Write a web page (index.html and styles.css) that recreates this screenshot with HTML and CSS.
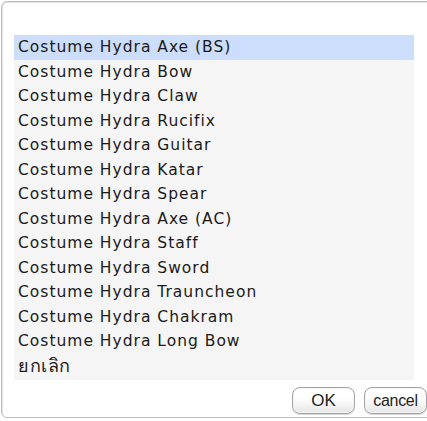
FILE: index.html
```html
<!DOCTYPE html>
<html>
<head>
<meta charset="utf-8">
<link rel="stylesheet" href="styles.css">
</head>
<body>
<div class="dialog">
  <ul class="list">
    <li class="item selected">Costume Hydra Axe (BS)</li>
    <li class="item">Costume Hydra Bow</li>
    <li class="item">Costume Hydra Claw</li>
    <li class="item">Costume Hydra Rucifix</li>
    <li class="item">Costume Hydra Guitar</li>
    <li class="item">Costume Hydra Katar</li>
    <li class="item">Costume Hydra Spear</li>
    <li class="item">Costume Hydra Axe (AC)</li>
    <li class="item">Costume Hydra Staff</li>
    <li class="item">Costume Hydra Sword</li>
    <li class="item">Costume Hydra Trauncheon</li>
    <li class="item">Costume Hydra Chakram</li>
    <li class="item">Costume Hydra Long Bow</li>
    <li class="item thai">ยกเลิก</li>
  </ul>
  <div class="buttons">
    <button class="btn ok">OK</button>
    <button class="btn cancel">cancel</button>
  </div>
</div>
</body>
</html>
```
FILE: styles.css
```css
html, body {
  margin: 0;
  padding: 0;
  background: #ffffff;
  overflow: hidden;
}
.dialog {
  box-sizing: border-box;
  margin: 1px 0 0 1px;
  width: 432px;
  height: 417px;
  border: 1px solid #bdbdbd;
  border-radius: 6px;
  box-shadow: inset 1px 1px 0 #e4e4e4;
  padding: 33px 0 0 12px;
  display: flex;
  flex-direction: column;
}
.list {
  list-style: none;
  margin: 0;
  padding: 0 0 2px 0;
  width: 400px;
  background: #f5f5f5;
}
.item {
  height: 24.5px;
  line-height: 24.5px;
  padding-left: 4px;
  font-family: "DejaVu Sans", Tahoma, sans-serif;
  font-size: 15.5px;
  letter-spacing: 1px;
  color: #1a1a1a;
  white-space: nowrap;
}
.item.thai {
  font-size: 18px;
  letter-spacing: 0.5px;
}
.item.selected {
  background: #cddefc;
}
.buttons {
  display: flex;
  justify-content: flex-end;
  gap: 9px;
  padding: 7px 0 0 0;
  margin-right: 5px;
}
.btn {
  box-sizing: border-box;
  height: 27px;
  border: 1px solid #a4a4a4;
  border-radius: 8px;
  background: linear-gradient(#ffffff 40%, #e6e6e6);
  box-shadow: inset 0 0 0 1px #f4f4f4, 0 1px 0 #d8d8d8;
  font-family: "Liberation Sans", Arial, sans-serif;
  font-size: 17px;
  color: #222;
  padding: 0;
}
.ok { width: 63px; }
.cancel { width: 63px; font-size: 16px; letter-spacing: -0.3px; }
```
